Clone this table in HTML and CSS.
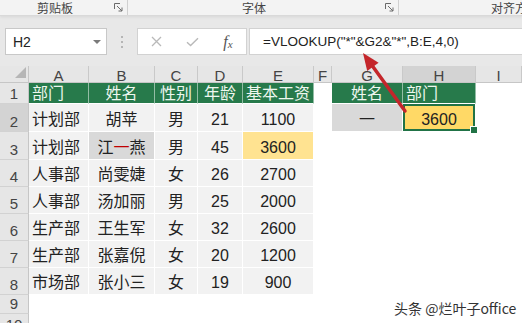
FILE: index.html
```html
<!DOCTYPE html>
<html lang="zh">
<head>
<meta charset="utf-8">
<title>VLOOKUP</title>
<link rel="stylesheet" href="styles.css">
</head>
<body>
<div class="app">
  <div class="ribbon">
    <div class="grp grp-clip"><span class="grp-label">剪贴板</span>
      <svg class="launcher" viewBox="0 0 9 9"><path d="M0.5 6V0.5H6" fill="none" stroke="#6a6a6a" stroke-width="1"/><path d="M3 3L8 8M8 4.5V8H4.5" fill="none" stroke="#6a6a6a" stroke-width="1"/></svg>
    </div>
    <div class="grp grp-font"><span class="grp-label">字体</span>
      <svg class="launcher" viewBox="0 0 9 9"><path d="M0.5 6V0.5H6" fill="none" stroke="#6a6a6a" stroke-width="1"/><path d="M3 3L8 8M8 4.5V8H4.5" fill="none" stroke="#6a6a6a" stroke-width="1"/></svg>
    </div>
    <div class="grp grp-align"><span class="grp-label">对齐方式</span></div>
  </div>

  <div class="fbar">
    <div class="namebox"><span>H2</span><span class="caret"></span></div>
    <div class="grip"><i></i><i></i><i></i></div>
    <div class="fbtns">
      <span class="fbtn"><svg width="11" height="11" viewBox="0 0 11 11"><path d="M1 1L10 10M10 1L1 10" stroke="#b9b9b9" stroke-width="1.3" fill="none"/></svg></span>
      <span class="fbtn"><svg width="13" height="10" viewBox="0 0 13 10"><path d="M1 5.2L4.6 8.6L12 1.2" stroke="#b9b9b9" stroke-width="1.4" fill="none"/></svg></span>
      <span class="fbtn fx">f<span class="fx-sub">x</span></span>
    </div>
    <div class="finput">=VLOOKUP("*"&amp;G2&amp;"*",B:E,4,0)</div>
  </div>

  <div class="sheet">
    <div class="corner"><span class="tri"></span></div>
    <div class="ch">A</div><div class="ch">B</div><div class="ch">C</div><div class="ch">D</div><div class="ch">E</div><div class="ch">F</div><div class="ch">G</div><div class="ch ch-sel">H</div><div class="ch">I</div>

    <div class="rh r1">1</div>
    <div class="c hd l">部门</div><div class="c hd">姓名</div><div class="c hd">性别</div><div class="c hd">年龄</div><div class="c hd">基本工资</div>
    <div class="c e"></div><div class="c hd">姓名</div><div class="c hd l">部门</div><div class="c e"></div>

    <div class="rh rh-sel">2</div>
    <div class="c d l">计划部</div><div class="c d">胡苹</div><div class="c d">男</div><div class="c d">21</div><div class="c d">1100</div>
    <div class="c e"></div><div class="c d gray">一</div><div class="c d yel sel">3600</div><div class="c e"></div>

    <div class="rh">3</div>
    <div class="c d l">计划部</div><div class="c d gray">江<span class="red">一</span>燕</div><div class="c d">男</div><div class="c d">45</div><div class="c d yel2">3600</div>
    <div class="c e"></div><div class="c e"></div><div class="c e"></div><div class="c e"></div>

    <div class="rh">4</div>
    <div class="c d l">人事部</div><div class="c d">尚雯婕</div><div class="c d">女</div><div class="c d">26</div><div class="c d">2700</div>
    <div class="c e"></div><div class="c e"></div><div class="c e"></div><div class="c e"></div>

    <div class="rh">5</div>
    <div class="c d l">人事部</div><div class="c d">汤加丽</div><div class="c d">男</div><div class="c d">25</div><div class="c d">2000</div>
    <div class="c e"></div><div class="c e"></div><div class="c e"></div><div class="c e"></div>

    <div class="rh">6</div>
    <div class="c d l">生产部</div><div class="c d">王生军</div><div class="c d">女</div><div class="c d">32</div><div class="c d">2600</div>
    <div class="c e"></div><div class="c e"></div><div class="c e"></div><div class="c e"></div>

    <div class="rh">7</div>
    <div class="c d l">生产部</div><div class="c d">张嘉倪</div><div class="c d">女</div><div class="c d">20</div><div class="c d">1200</div>
    <div class="c e"></div><div class="c e"></div><div class="c e"></div><div class="c e"></div>

    <div class="rh">8</div>
    <div class="c d l">市场部</div><div class="c d">张小三</div><div class="c d">女</div><div class="c d">19</div><div class="c d">900</div>
    <div class="c e"></div><div class="c e"></div><div class="c e"></div><div class="c e"></div>

    <div class="rh">9</div>
    <div class="c e"></div><div class="c e"></div><div class="c e"></div><div class="c e"></div><div class="c e"></div>
    <div class="c e"></div><div class="c e"></div><div class="c e"></div><div class="c e"></div>

    <div class="rh r10">10</div>
    <div class="c e"></div><div class="c e"></div><div class="c e"></div><div class="c e"></div><div class="c e"></div>
    <div class="c e"></div><div class="c e"></div><div class="c e"></div><div class="c e"></div>
  </div>

  <svg class="arrow" width="522" height="323" viewBox="0 0 522 323">
    <line x1="405" y1="111" x2="371" y2="64" stroke="#c4262b" stroke-width="3.5" stroke-linecap="round"/>
    <polygon points="363,53 378.6,62.7 367.2,70.9" fill="#c4262b"/>
  </svg>

  <div class="watermark">头条 @烂叶子office</div>
</div>
</body>
</html>
```

FILE: styles.css
```css
* { box-sizing: border-box; margin: 0; padding: 0; }
html, body { width: 522px; height: 323px; overflow: hidden; background: #fff; }
body { font-family: "Liberation Sans", "Noto Sans CJK SC", sans-serif; color: #222; }

.app { position: relative; width: 522px; height: 323px; overflow: hidden; background: #e8e8e8; }

/* ribbon group labels */
.ribbon { height: 16px; display: flex; background: #f3f3f3; border-bottom: 1px solid #d9d9d9; box-shadow: 0 1px 3px rgba(0,0,0,0.08); font-size: 12px; line-height: 15px; color: #444; font-family: "Noto Sans CJK SC", sans-serif; white-space: nowrap; }
.grp { display: flex; align-items: center; height: 15px; border-right: 1px solid #d0d0d0; }
.grp-label { display: block; line-height: 15px; white-space: nowrap; }
.grp-clip { width: 128px; padding-left: 37px; }
.grp-font { width: 271px; padding-left: 114px; }
.grp-align { flex: 1; min-width: 0; padding-left: 92px; border-right: none; }
.launcher { margin-left: auto; margin-right: 4px; width: 9px; height: 9px; flex: none; }

/* formula bar */
.fbar { height: 50px; display: flex; align-items: flex-start; padding: 12px 0 0 5px; }
.namebox { width: 102px; height: 27px; background: #fff; border: 1px solid #c8c8c8; display: flex; align-items: center; padding-left: 7px; font-size: 14px; color: #222; }
.caret { margin-left: auto; margin-right: 5px; width: 0; height: 0; border-left: 4px solid transparent; border-right: 4px solid transparent; border-top: 4px solid #7a7a7a; }
.grip { width: 30px; height: 27px; display: flex; flex-direction: column; align-items: center; justify-content: center; gap: 3px; }
.grip i { display: block; width: 2px; height: 2px; background: #b5b5b5; }
.fbtns { width: 110px; height: 27px; background: #fff; border: 1px solid #d2d2d2; display: grid; grid-template-columns: repeat(3, 1fr); align-items: center; justify-items: center; }
.fbtn { display: flex; align-items: center; justify-content: center; }
.fx { font-family: "Liberation Serif", serif; font-style: italic; font-size: 16px; color: #555; line-height: 16px; }
.fx-sub { font-size: 11px; position: relative; top: 2px; }
.finput { flex: 1; margin-left: 2px; height: 27px; background: #fff; border: 1px solid #d2d2d2; border-right: none; padding-left: 13px; font-size: 13.5px; line-height: 25px; color: #222; white-space: nowrap; }

/* grid */
.sheet { display: grid; grid-template-columns: 29px 60px 66px 43px 45px 71px 18px 71px 73px 1fr; grid-template-rows: 17px 21px 28px 28px 27px 27px 27px 27px 27px 19px 1fr; height: 257px; background: #fff; }
.corner { background: #e6e6e6; border-right: 1px solid #c6c6c6; border-bottom: 1px solid #c6c6c6; display: flex; justify-content: flex-end; align-items: flex-end; padding: 0 2px 4px 0; }
.tri { width: 0; height: 0; border-left: 11px solid transparent; border-bottom: 11px solid #b6b6b6; }
.ch { background: #e6e6e6; border-right: 1px solid #c9c9c9; border-bottom: 1px solid #c6c6c6; font-size: 15px; line-height: 14px; padding-top: 3px; color: #444; text-align: center; }
.ch-sel { background: #d3d3d3; }
.rh { background: #e6e6e6; border-right: 1px solid #c6c6c6; border-bottom: 1px solid #d2d2d2; font-size: 15px; line-height: 15px; color: #444; display: flex; align-items: flex-end; justify-content: center; padding-bottom: 2px; }
.rh-sel { background: #d3d3d3; }
.r10 { align-items: flex-start; padding-top: 3px; padding-bottom: 0; }

.c { display: flex; align-items: flex-end; justify-content: center; font-size: 16px; line-height: 16px; padding-bottom: 3px; white-space: nowrap; overflow: hidden; }
.l { justify-content: flex-start; padding-left: 3px; }
.d { background: #f2f2f2; border-right: 1px solid #fff; border-bottom: 1px solid #fff; color: #222; }
.hd { background: #277a4b; color: #eef7ef; border-right: 1px solid rgba(255,255,255,0.5); border-bottom: 1px solid #fff; padding-bottom: 1px; }
.e { background: #fff; }
.gray { background: #d9d9d9; }
.red { color: #c00000; }
.yel { background: #ffd966; }
.yel2 { background: #ffe391; }
.sel { position: relative; overflow: visible; box-shadow: inset 0 0 0 2px #217346; z-index: 2; }
.sel::after { content: ""; position: absolute; right: -3px; bottom: -3px; width: 6px; height: 6px; background: #217346; border: 1px solid #fff; }

.arrow { position: absolute; left: 0; top: 0; z-index: 5; pointer-events: none; }
.watermark { position: absolute; left: 394px; top: 300px; font-family: "Noto Sans CJK SC", sans-serif; font-size: 14px; line-height: 16px; color: #333; z-index: 6; text-shadow: 0 0 2px #fff; }
```
